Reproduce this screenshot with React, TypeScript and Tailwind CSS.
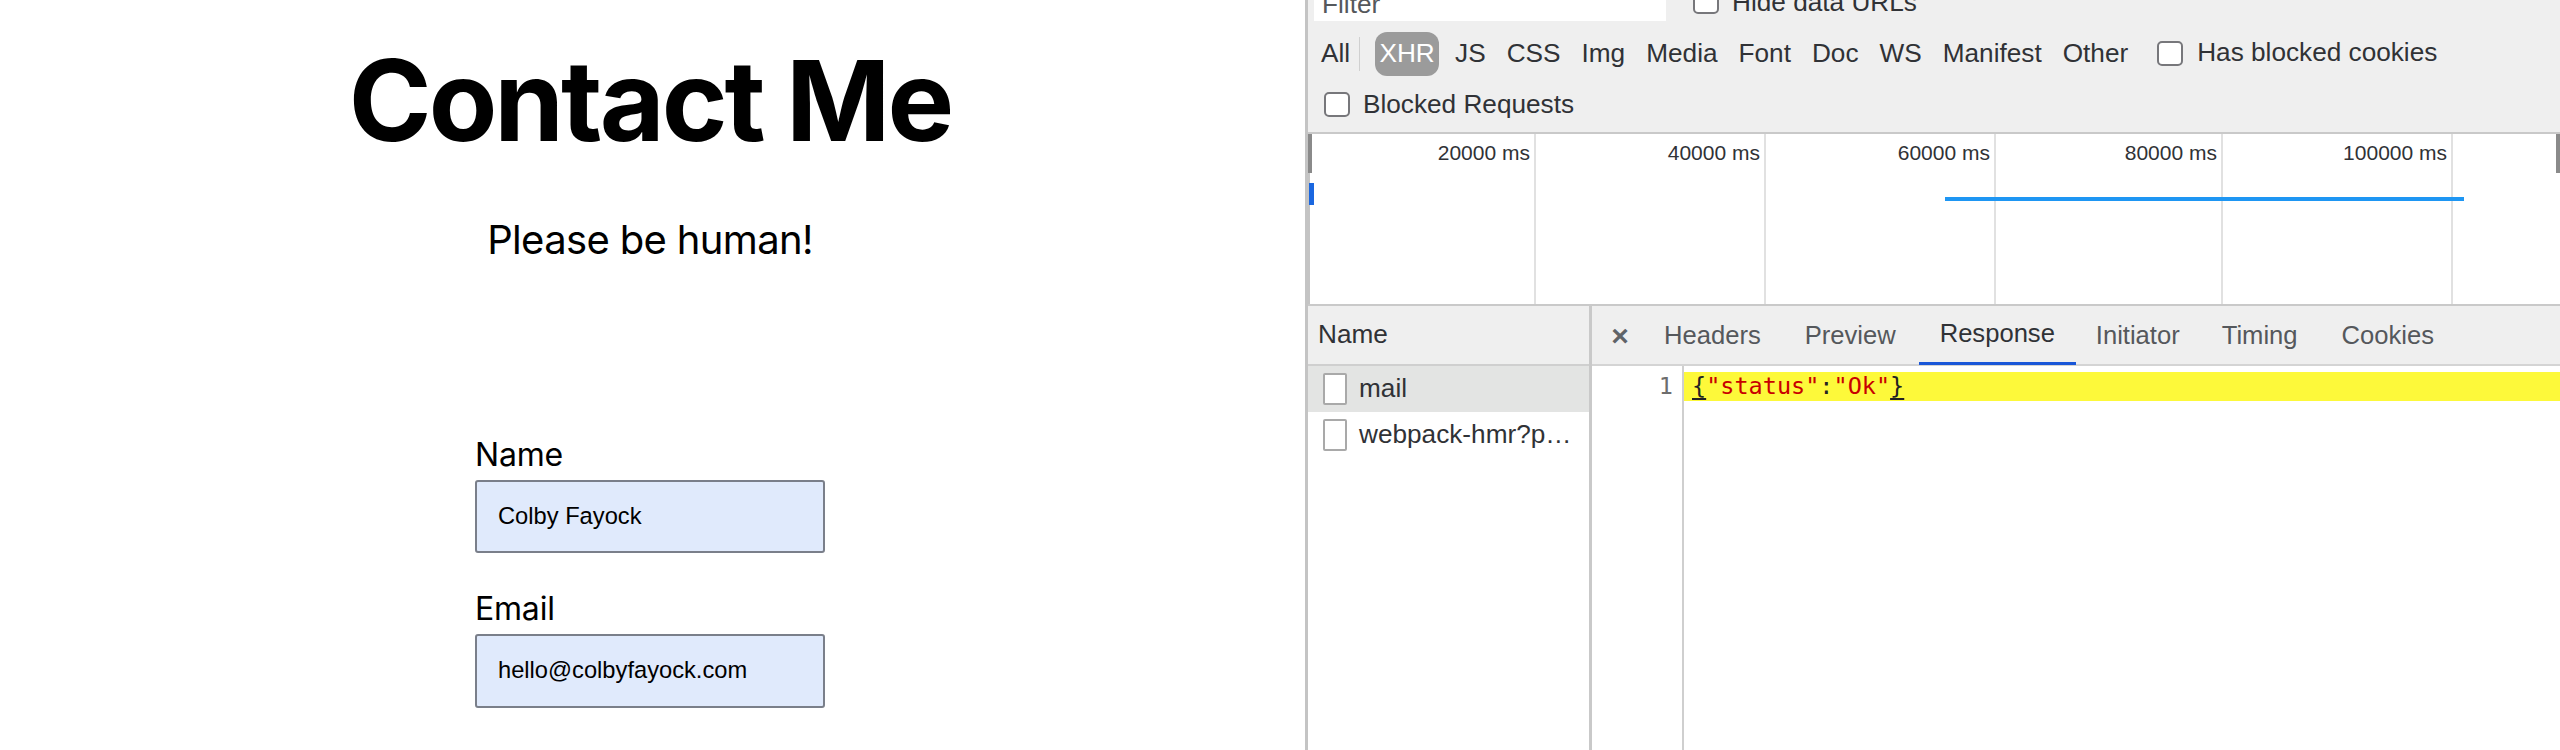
import React from 'react';

const sans = "font-['Liberation_Sans',Arial,sans-serif]";
const mono = "font-['DejaVu_Sans_Mono',monospace]";

const types = ['JS', 'CSS', 'Img', 'Media', 'Font', 'Doc', 'WS', 'Manifest', 'Other'];

const ticks = [
  { label: '20000 ms', cls: 'left-[226px]' },
  { label: '40000 ms', cls: 'left-[456px]' },
  { label: '60000 ms', cls: 'left-[686px]' },
  { label: '80000 ms', cls: 'left-[913px]' },
  { label: '100000 ms', cls: 'left-[1143px]' },
];

const Check = () => (
  <span className="block w-[26px] h-[25px] shrink-0 rounded-[5px] border-2 border-[#77777b] bg-white" />
);

const FileIcon = () => (
  <span className="block w-[24px] h-[32px] shrink-0 border-2 border-[#a9a9a9] rounded-[2px] bg-white" />
);

const ContactForm = () => (
  <div className="w-[1305px] pr-[5px] shrink-0 bg-white text-black font-['Inter',sans-serif] flex flex-col items-center">
    <h1 className="mt-[39px] text-[112px] leading-[122px] font-bold tracking-[-3px]">Contact Me</h1>
    <p className="mt-[51px] text-[40px] leading-[56px] tracking-[-0.65px]">Please be human!</p>
    <form className="mt-[167px] w-[350px]">
      <label className="block text-[32px] leading-[40px] mb-[5px] tracking-[-0.2px]">Name</label>
      <div className={`${sans} h-[73px] flex items-center pl-[21px] text-[23.7px] bg-[#e0eafc] border-2 border-[#7a7f8a] rounded-[3px]`}>
        Colby Fayock
      </div>
      <label className="block text-[32px] leading-[40px] mt-[36px] mb-[5px] tracking-[-0.2px]">Email</label>
      <div className={`${sans} h-[74px] flex items-center pl-[21px] text-[23.7px] bg-[#e0eafc] border-2 border-[#7a7f8a] rounded-[3px]`}>
        hello@colbyfayock.com
      </div>
    </form>
  </div>
);

const DevTools = () => (
  <div className={`${sans} flex-1 flex flex-col h-[750px] overflow-hidden border-l-[3px] border-[#c4c4c4] bg-[#efefef] text-[#303236] text-[26.2px]`}>
    {/* filter row, cut off by the top of the shot */}
    <div className="h-[21px] flex items-end pl-[6px]">
      <div className="w-[352px] h-[21px] bg-white pl-[8px] text-[#55585c] flex items-end">
        <span className="mb-[2px] leading-[30px]">Filter</span>
      </div>
      <div className="ml-[27px] h-[21px] flex items-end gap-[13px]">
        <span className="mb-[7px]"><Check /></span>
        <span className="mb-[4px] leading-[30px]">Hide data URLs</span>
      </div>
    </div>

    {/* resource type filters */}
    <div className="mt-[11px] h-[44px] flex items-center pl-[13px]">
      <span>All</span>
      <span className="w-px h-[34px] bg-[#d0d0d0] ml-[9px] mr-[15px]" />
      <span className="w-[64px] h-[44px] rounded-[12px] bg-[#9b9b9b] text-white flex items-center justify-center">XHR</span>
      <div className="ml-[16px] flex items-center gap-[21px]">
        {types.map((t) => (
          <span key={t}>{t}</span>
        ))}
      </div>
      <span className="ml-[29px] -mt-[1px]"><Check /></span>
      <span className="ml-[14px] -mt-[2px]">Has blocked cookies</span>
    </div>

    <div className="mt-[16px] h-[25px] flex items-center pl-[16px] gap-[13px]">
      <Check />
      <span>Blocked Requests</span>
    </div>

    {/* overview timeline */}
    <div className="mt-[15px] relative h-[174px] bg-white border-y-2 border-[#c9c9c9] text-[21px]">
      <span className="absolute left-0 top-0 w-[4px] h-[39px] bg-[#8a8a8a]" />
      <span className="absolute left-0 top-[39px] bottom-0 w-[2px] bg-[#c4c4c4]" />
      <span className="absolute left-[1px] top-[49px] w-[5px] h-[22px] bg-[#1a67e0]" />
      <span className="absolute right-0 top-0 w-[4px] h-[39px] bg-[#8a8a8a]" />
      {ticks.map((t) => (
        <div key={t.label} className={`absolute top-0 bottom-0 w-[2px] bg-[#e1e1e1] ${t.cls}`}>
          <span className="absolute right-[6px] top-[7px] leading-[24px] whitespace-nowrap">{t.label}</span>
        </div>
      ))}
      <span className="absolute left-[637px] w-[519px] top-[63px] h-[4px] bg-[#1e96f3]" />
    </div>

    {/* request list and response */}
    <div className="flex flex-1 min-h-0">
      <div className="w-[284px] shrink-0 flex flex-col bg-white border-r-[3px] border-[#c9c9c9]">
        <div className="h-[60px] bg-[#efefef] border-b-2 border-[#cfcfcf] flex items-center pl-[10px]">Name</div>
        <div className="h-[46px] bg-[#e3e4e3] flex items-center pl-[15px] gap-[12px]">
          <FileIcon />
          <span>mail</span>
        </div>
        <div className="h-[46px] flex items-center pl-[15px] gap-[12px] whitespace-nowrap">
          <FileIcon />
          <span>webpack-hmr?p…</span>
        </div>
      </div>
      <div className="flex-1 flex flex-col bg-white">
        <div className="h-[60px] bg-[#efefef] border-b-2 border-[#d4d4d4] flex items-center text-[#55585c] text-[25.6px]">
          <span className="w-[56px] text-center text-[#5f6368] text-[30px] font-bold">×</span>
          <span className="ml-[16px]">Headers</span>
          <span className="ml-[44px]">Preview</span>
          <span className="ml-[23px] w-[157px] h-[60px] flex items-center justify-center text-[#303236] border-b-[3px] border-[#1a57d8]">Response</span>
          <span className="ml-[20px]">Initiator</span>
          <span className="ml-[42px]">Timing</span>
          <span className="ml-[44px]">Cookies</span>
        </div>
        <div className="flex flex-1">
          <div className={`${mono} w-[92px] border-r-2 border-[#cfcfcf] text-right pr-[9px] pt-[6px] text-[23.5px] leading-[29px] text-[#6d6d6d]`}>1</div>
          <div className={`${mono} flex-1 mt-[6px] h-[29px] bg-[#fdf93a] pl-[8px] text-[23.5px] leading-[28px] whitespace-nowrap text-[#222]`}>
            <span className="underline underline-offset-4">{'{'}</span>
            <span className="text-[#c80000]">"status"</span>:<span className="text-[#c80000]">"Ok"</span>
            <span className="underline underline-offset-4">{'}'}</span>
          </div>
        </div>
      </div>
    </div>
  </div>
);

const App = () => {
  return (
    <div className="flex w-[2560px] h-[750px] overflow-hidden bg-white">
      <ContactForm />
      <DevTools />
    </div>
  );
};

export default App;
